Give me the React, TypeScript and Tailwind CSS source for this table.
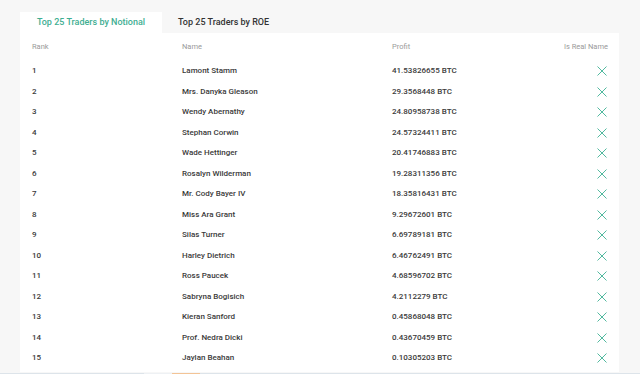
import React from 'react';

type Trader = { rank: number; name: string; profit: string };

const traders: Trader[] = [
  { rank: 1, name: 'Lamont Stamm', profit: '41.53826655' },
  { rank: 2, name: 'Mrs. Danyka Gleason', profit: '29.3568448' },
  { rank: 3, name: 'Wendy Abernathy', profit: '24.80958738' },
  { rank: 4, name: 'Stephan Corwin', profit: '24.57324411' },
  { rank: 5, name: 'Wade Hettinger', profit: '20.41746883' },
  { rank: 6, name: 'Rosalyn Wilderman', profit: '19.28311356' },
  { rank: 7, name: 'Mr. Cody Bayer IV', profit: '18.35816431' },
  { rank: 8, name: 'Miss Ara Grant', profit: '9.29672601' },
  { rank: 9, name: 'Silas Turner', profit: '6.69789181' },
  { rank: 10, name: 'Harley Dietrich', profit: '6.46762491' },
  { rank: 11, name: 'Ross Paucek', profit: '4.68596702' },
  { rank: 12, name: 'Sabryna Bogisich', profit: '4.2112279' },
  { rank: 13, name: 'Kieran Sanford', profit: '0.45868048' },
  { rank: 14, name: 'Prof. Nedra Dicki', profit: '0.43670459' },
  { rank: 15, name: 'Jaylan Beahan', profit: '0.10305203' },
];

const Cross = () => (
  <svg width="10" height="10" viewBox="0 0 10 10" className="text-[#52b99f]">
    <path d="M0.5 0.5L9.5 9.5M9.5 0.5L0.5 9.5" stroke="currentColor" strokeWidth="1" fill="none" />
  </svg>
);

const cols = 'grid grid-cols-[150px_210px_1fr_auto] items-center';

export default function App() {
  return (
    <div className="w-[640px] h-[374px] bg-[#f7f7f7] font-['Roboto',sans-serif] overflow-hidden flex flex-col">
      <div className="mx-[20px] mt-[12px] w-[599px]">
        {/* tabs */}
        <div className="flex h-[21px]">
          <div className="w-[142px] bg-white flex items-center justify-center text-[9px] font-medium text-[#3fae92]">
            Top 25 Traders by Notional
          </div>
          <div className="pl-[16px] flex items-center text-[9px] font-medium text-[#333]">
            Top 25 Traders by ROE
          </div>
        </div>

        <div className="bg-white pl-[12px] pr-[11px] pb-[3px]">
          <div className={`${cols} h-[28px] text-[7.5px] text-[#9a9a9a]`}>
            <span>Rank</span>
            <span>Name</span>
            <span>Profit</span>
            <span>Is Real Name</span>
          </div>
          {traders.map((t) => (
            <div key={t.rank} className={`${cols} h-[20.5px] text-[8px] font-medium text-[#3a3a3a]`}>
              <span>{t.rank}</span>
              <span>{t.name}</span>
              <span>{t.profit} BTC</span>
              <span className="flex justify-end pr-[1px]">
                <Cross />
              </span>
            </div>
          ))}
        </div>
      </div>

      <div className="mt-auto flex h-[1px]">
        <div className="w-[144px] bg-[#dde4ea]" />
        <div className="w-[28px] bg-[#eef1f4]" />
        <div className="w-[28px] bg-[#f3c496]" />
        <div className="flex-1 bg-[#dde4ea]" />
      </div>
    </div>
  );
}
